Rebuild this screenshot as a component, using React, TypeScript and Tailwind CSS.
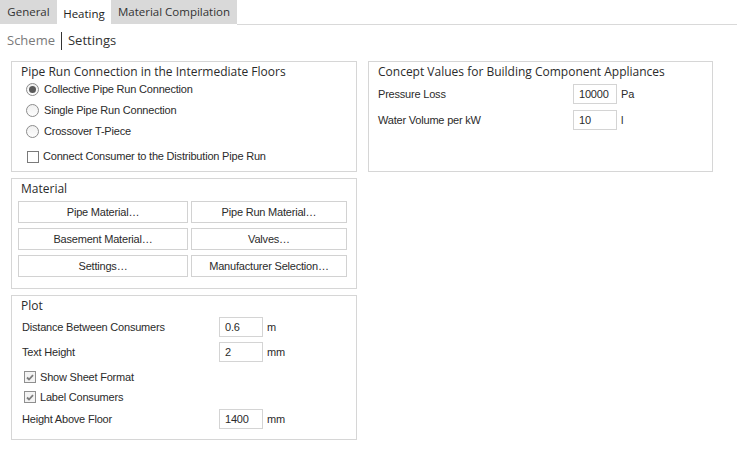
import React from 'react'

const ui = "font-['Open_Sans','Noto_Sans',sans-serif]"
const small = "font-['Liberation_Sans','Arial',sans-serif] text-[11px] tracking-[-0.2px] text-[#2b2b2b]"

function Tab({ label, active, w }: { label: string; active?: boolean; w: string }) {
  return active ? (
    <div className={`${w} h-[25px] pt-[2px] bg-white flex items-center justify-center text-[11.5px] text-[#222]`}>
      {label}
    </div>
  ) : (
    <div className={`${w} h-[24px] bg-[#d9d9d9] flex items-center justify-center text-[11.5px] text-[#333]`}>
      {label}
    </div>
  )
}

function Group({ title, className, children }: { title: string; className?: string; children?: React.ReactNode }) {
  return (
    <div className={`border border-[#d6d6d6] bg-white ${className ?? ''}`}>
      <div className={`${ui} h-[16px] leading-[16px] pl-[9px] text-[12px] text-[#2b2b2b] mt-[2px]`}>{title}</div>
      {children}
    </div>
  )
}

function Radio({ label, checked }: { label: string; checked?: boolean }) {
  return (
    <div className="h-[21px] flex items-center pl-[14px] gap-[5px]">
      <span className="w-[13px] h-[13px] rounded-full border border-[#8c8c8c] bg-gradient-to-b from-[#f0f0f0] to-[#fdfdfd] flex items-center justify-center">
        {checked && <span className="w-[7px] h-[7px] rounded-full bg-[#5a5a5a]" />}
      </span>
      <span className={small}>{label}</span>
    </div>
  )
}

function Check({ label, checked }: { label: string; checked?: boolean }) {
  return (
    <div className="flex items-center gap-[4px]">
      <span
        className={`w-[12px] h-[12px] border flex items-center justify-center ${
          checked ? 'border-[#8f8f8f] bg-[#f3f3f3]' : 'border-[#7a7a7a] bg-white'
        }`}
      >
        {checked && (
          <svg width="8" height="7" viewBox="0 0 8 7">
            <path d="M1 3.5 L3 5.5 L7 1.2" fill="none" stroke="#7d7d7d" strokeWidth="1.8" />
          </svg>
        )}
      </span>
      <span className={small}>{label}</span>
    </div>
  )
}

function Field({ label, value, unit, labelW }: { label: string; value: string; unit: string; labelW: string }) {
  return (
    <div className="flex items-center">
      <span className={`${small} ${labelW}`}>{label}</span>
      <span className={`${small} w-[44px] h-[20px] border border-[#d4d4d4] bg-white pl-[5px] flex items-center`}>{value}</span>
      <span className={`${small} pl-[4px]`}>{unit}</span>
    </div>
  )
}

function Btn({ label }: { label: string }) {
  return (
    <div className={`${small} h-[22px] border border-[#d2d2d2] bg-white flex items-center justify-center`}>{label}</div>
  )
}

export default function App() {
  return (
    <div className={`${ui} w-[737px] h-[456px] bg-white overflow-hidden`}>
      <div className="flex h-[25px]">
        <Tab label="General" w="w-[57px]" />
        <Tab label="Heating" w="w-[54px]" active />
        <Tab label="Material Compilation" w="w-[126px]" />
        <div className="flex-1 border-b border-[#d9d9d9]" />
      </div>

      <div className="flex items-center h-[20px] mt-[6px] pl-[7px] text-[13px]">
        <span className="text-[#7a7a7a]">Scheme</span>
        <span className="w-px h-[18px] bg-[#333] mx-[6px]" />
        <span className="text-[#333]">Settings</span>
      </div>

      <div className="flex gap-[11px] pl-[11px] mt-[10px]">
        <div className="w-[346px] flex flex-col gap-[6px]">
          <Group title="Pipe Run Connection in the Intermediate Floors" className="h-[111px]">
            <div className="-mt-[1px]">
              <Radio label="Collective Pipe Run Connection" checked />
              <Radio label="Single Pipe Run Connection" />
              <Radio label="Crossover T-Piece" />
            </div>
            <div className="h-[21px] mt-[4px] flex items-center pl-[15px]">
              <Check label="Connect Consumer to the Distribution Pipe Run" />
            </div>
          </Group>

          <Group title="Material" className="h-[111px]">
            <div className="grid grid-cols-[170px_156px] gap-x-[3px] gap-y-[5px] pl-[6px] mt-[4px]">
              <Btn label="Pipe Material…" />
              <Btn label="Pipe Run Material…" />
              <Btn label="Basement Material…" />
              <Btn label="Valves…" />
              <Btn label="Settings…" />
              <Btn label="Manufacturer Selection…" />
            </div>
          </Group>

          <Group title="Plot" className="h-[145px]">
            <div className="pl-[10px] mt-[3px] flex flex-col">
              <Field label="Distance Between Consumers" value="0.6" unit="m" labelW="w-[197px]" />
              <div className="mt-[5px]">
                <Field label="Text Height" value="2" unit="mm" labelW="w-[197px]" />
              </div>
              <div className="h-[20px] mt-[5px] flex items-center pl-[2px]">
                <Check label="Show Sheet Format" checked />
              </div>
              <div className="h-[20px] flex items-center pl-[2px]">
                <Check label="Label Consumers" checked />
              </div>
              <div className="mt-[2px]">
                <Field label="Height Above Floor" value="1400" unit="mm" labelW="w-[197px]" />
              </div>
            </div>
          </Group>
        </div>

        <div className="w-[345px]">
          <Group title="Concept Values for Building Component Appliances" className="h-[111px]">
            <div className="pl-[9px] mt-[4px] flex flex-col gap-[6px]">
              <Field label="Pressure Loss" value="10000" unit="Pa" labelW="w-[195px]" />
              <Field label="Water Volume per kW" value="10" unit="l" labelW="w-[195px]" />
            </div>
          </Group>
        </div>
      </div>
    </div>
  )
}
